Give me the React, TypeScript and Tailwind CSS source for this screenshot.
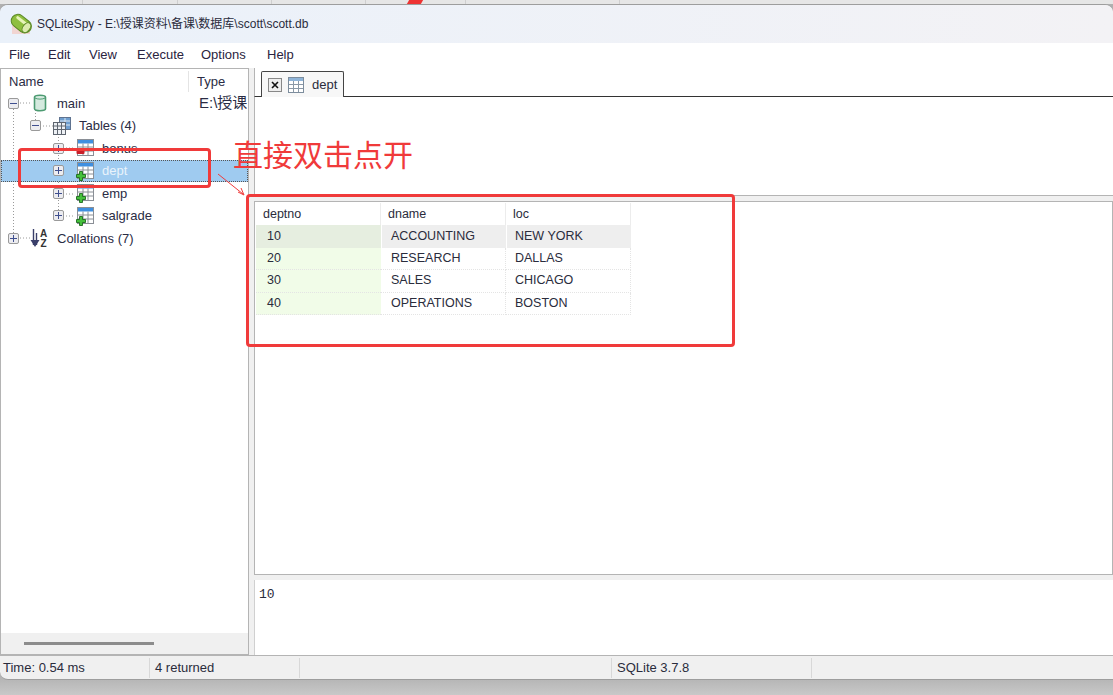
const menuItems = [
  { label: "File", width: "w-[39px]" },
  { label: "Edit", width: "w-[41px]" },
  { label: "View", width: "w-[48px]" },
  { label: "Execute", width: "w-[64px]" },
  { label: "Options", width: "w-[66px]" },
  { label: "Help", width: "w-[40px]" },
];

const deptRows = [
  ["10", "ACCOUNTING", "NEW YORK"],
  ["20", "RESEARCH", "DALLAS"],
  ["30", "SALES", "CHICAGO"],
  ["40", "OPERATIONS", "BOSTON"],
];

function AppLogo() {
  return (
    <svg width="22" height="22" viewBox="0 0 22 22">
      <rect x="2" y="12" width="18" height="9" fill="#f3c9c0" opacity="0.7" />
      <g transform="rotate(38 11 11)">
        <rect x="0" y="4" width="22" height="13" rx="6.5" fill="#8fbf3f" stroke="#5c8a26" />
        <rect x="3" y="6.5" width="13" height="3" rx="1.5" fill="#e6f4b8" />
        <ellipse cx="17.5" cy="10.5" rx="3.5" ry="5.5" fill="#dcecae" stroke="#5c8a26" />
      </g>
    </svg>
  );
}

function Expander({ open }: { open?: boolean }) {
  return (
    <span className="relative block h-[11px] w-[11px] shrink-0 rounded-[2px] border border-[#9a9a9a] bg-[#ececf0]">
      <span className="absolute left-[1px] top-[4px] h-[1px] w-[7px] bg-[#3f4f8f]" />
      {!open && <span className="absolute left-[4px] top-[1px] h-[7px] w-[1px] bg-[#3f4f8f]" />}
    </span>
  );
}

function CylinderIcon() {
  return (
    <svg width="14" height="18" viewBox="0 0 14 18" className="shrink-0">
      <path d="M1.5 3.2C1.5 0.6 12.5 0.6 12.5 3.2V14.8C12.5 17.4 1.5 17.4 1.5 14.8Z" fill="#d5eadf" stroke="#4d9b72" strokeWidth="1.6" />
      <path d="M2 4C4 5.5 10 5.5 12 4" fill="none" stroke="#4d9b72" />
    </svg>
  );
}

function TableIcon({ badge }: { badge?: "plus" | "minus" }) {
  return (
    <svg width="18" height="18" viewBox="0 0 18 18" className="shrink-0 overflow-visible">
      <rect x="1.5" y="0.5" width="16" height="16" fill="#fff" stroke="#8a8f96" />
      <rect x="2" y="1" width="15" height="3.5" fill="#3f8fe0" />
      <path d="M2 8H17M2 12H17M7 4.5V16M12 4.5V16" stroke="#8a8f96" />
      {badge === "plus" && (
        <path d="M3.5 9.5H6.5V12.5H9.5V15.5H6.5V18.5H3.5V15.5H0.5V12.5H3.5Z" fill="#46c03c" stroke="#1d6b1d" strokeWidth="0.9" />
      )}
      {badge === "minus" && <rect x="0.5" y="11" width="8" height="4" rx="1" fill="#c8202a" />}
    </svg>
  );
}

function TablesIcon() {
  return (
    <svg width="18" height="18" viewBox="0 0 18 18" className="shrink-0">
      <rect x="6.5" y="0.5" width="11" height="12" fill="#6f9fd0" stroke="#5f7390" />
      <path d="M7 4H17M7 8H17M12 1V12" stroke="#dfe8f2" />
      <rect x="0.5" y="5.5" width="12" height="12" fill="#eef1f5" stroke="#5f6670" />
      <path d="M1 9H12M1 12.5H12M4.5 6V17M8.5 6V17" stroke="#5f6670" />
    </svg>
  );
}

function SortIcon() {
  return (
    <svg width="20" height="20" viewBox="0 0 20 20" className="shrink-0">
      <path d="M3.5 1V17M6.5 5V17" stroke="#3a3f6a" strokeWidth="1.4" />
      <path d="M0.5 12L5 19L9.5 12Z" fill="#3a3f6a" />
      <text x="10" y="9" fontFamily="Liberation Sans, sans-serif" fontSize="10" fontWeight="700" fill="#333">A</text>
      <text x="10.5" y="19" fontFamily="Liberation Sans, sans-serif" fontSize="10" fontWeight="700" fill="#333">Z</text>
    </svg>
  );
}

function TreeRow({
  indent,
  open,
  icon,
  label,
  selected,
  typeText,
}: {
  indent: string;
  open?: boolean;
  icon: JSX.Element;
  label: string;
  selected?: boolean;
  typeText?: string;
}) {
  return (
    <div
      className={
        selected
          ? "flex h-[22.5px] items-center bg-[#9fcbf0] outline-1 -outline-offset-1 outline-dotted outline-[#555]"
          : "flex h-[22.5px] items-center"
      }
    >
      <div className={`flex w-[189px] shrink-0 items-center ${indent}`}>
        <Expander open={open} />
        <span className="ml-[12px] flex h-[18px] w-[18px] shrink-0 items-center justify-center">{icon}</span>
        <span className={selected ? "ml-[8px] text-[#e9f3fb]" : "ml-[8px]"}>{label}</span>
      </div>
      {typeText && <span className="ml-[9px] overflow-hidden whitespace-nowrap text-[15px]">{typeText}</span>}
    </div>
  );
}

function Sidebar() {
  return (
    <div className="flex w-[249px] shrink-0 flex-col border border-[#b4b4b4] bg-white text-[13px] text-[#2a2c44]">
      <div className="flex h-[23px] shrink-0 items-center pt-[2px]">
        <span className="w-[187px] pl-[8px]">Name</span>
        <span className="h-full border-l border-[#e4e4e4] pl-[8px] leading-[21px]">Type</span>
      </div>
      <div className="relative flex-1">
        <svg className="absolute left-0 top-0" width="76" height="150" fill="none" stroke="#9a9a9a" strokeDasharray="1 2">
          <path d="M12.5 17V146M34.5 18V30M57.5 42V125" />
          <path d="M19 11H29M42 34H52M65 56H73M65 79H73M65 102H73M65 124H73M19 146H29" />
        </svg>
        <div className="relative">
          <TreeRow indent="pl-[7px]" open icon={<CylinderIcon />} label="main" typeText="E:\授课" />
          <TreeRow indent="pl-[29px]" open icon={<TablesIcon />} label="Tables (4)" />
          <TreeRow indent="pl-[52px]" icon={<TableIcon badge="minus" />} label="bonus" />
          <TreeRow indent="pl-[52px]" icon={<TableIcon badge="plus" />} label="dept" selected />
          <TreeRow indent="pl-[52px]" icon={<TableIcon badge="plus" />} label="emp" />
          <TreeRow indent="pl-[52px]" icon={<TableIcon badge="plus" />} label="salgrade" />
          <TreeRow indent="pl-[7px]" icon={<SortIcon />} label="Collations (7)" />
        </div>
      </div>
      <div className="flex h-[21px] shrink-0 items-center bg-[#f0f0f0] pl-[23px]">
        <div className="h-[3px] w-[130px] bg-[#8c8c8c]" />
      </div>
    </div>
  );
}

function ResultGrid() {
  return (
    <div className="flex-1 border border-[#b4b4b4] bg-white pl-px pt-px">
      <div className="grid w-[375px] grid-cols-[125px_125px_125px]">
        <div className="flex h-[22px] items-center border-r border-[#ececec] pl-[7px]">deptno</div>
        <div className="flex h-[22px] items-center border-r border-[#ececec] pl-[7px]">dname</div>
        <div className="flex h-[22px] items-center border-r border-[#ececec] pl-[7px]">loc</div>
        {deptRows.map((row, i) => (
          <div key={row[0]} className="contents">
            <div
              className={
                i === 0
                  ? "flex h-[22.5px] items-center bg-[#e6eee0] pl-[11px]"
                  : "flex h-[22.5px] items-center border-b border-dotted border-[#e4e4e4] bg-[#f1fce8] pl-[11px]"
              }
            >
              {row[0]}
            </div>
            <div
              className={
                i === 0
                  ? "flex h-[22.5px] items-center border-l border-white bg-[#eeeeee] pl-[9px]"
                  : "flex h-[22.5px] items-center border-r border-b border-dotted border-[#e4e4e4] pl-[10px]"
              }
            >
              {row[1]}
            </div>
            <div
              className={
                i === 0
                  ? "flex h-[22.5px] items-center border-l border-white bg-[#eeeeee] pl-[8px]"
                  : "flex h-[22.5px] items-center border-r border-b border-dotted border-[#e4e4e4] pl-[9px]"
              }
            >
              {row[2]}
            </div>
          </div>
        ))}
      </div>
    </div>
  );
}

export default function App() {
  return (
    <div className="relative h-[695px] w-[1113px] overflow-hidden bg-gradient-to-b from-[#b0b0b0] from-[97%] to-[#c8c8c8] font-['Liberation_Sans','Noto_Sans_CJK_SC',sans-serif] text-[12.5px] text-[#2a2c3c]">
      <div className="flex h-[4px] bg-[#e6e6e6]">
        <div className="ml-[82px] w-[95px] border-l border-[#cfcfcf]" />
        <div className="w-[94px] border-l border-[#cfcfcf]" />
        <div className="w-[94px] border-l border-[#cfcfcf]" />
        <div className="w-[100px] border-l border-[#cfcfcf]">
          <div className="ml-[42px] h-[4px] w-[14px] -skew-x-[30deg] bg-[#ee3333]" />
        </div>
        <div className="w-[154px] border-l border-[#cfcfcf]" />
        <div className="border-l border-[#cfcfcf]" />
      </div>
      <div className="flex h-[676px] flex-col overflow-hidden rounded-t-[8px] rounded-bl-[8px] border-t border-b border-[#9d9d9d] bg-[#f0f0f0]">
        <div className="flex h-[38px] shrink-0 items-center bg-gradient-to-r from-[#eaf1fa] to-[#f3f2f5] pl-[10px]">
          <AppLogo />
          <span className="ml-[5px] text-[12px]">SQLiteSpy - E:\授课资料\备课\数据库\scott\scott.db</span>
        </div>
        <div className="flex h-[25px] shrink-0 items-center bg-white pb-[2px] pl-[9px] text-[13px] text-[#2a2440]">
          {menuItems.map((item) => (
            <span key={item.label} className={item.width}>
              {item.label}
            </span>
          ))}
        </div>
        <div className="flex min-h-0 flex-1">
          <Sidebar />
          <div className="ml-[5px] flex min-w-0 flex-1 flex-col">
            <div className="relative h-[29px] shrink-0 border-b border-[#333] border-l border-l-[#b4b4b4] bg-white">
              <div className="absolute left-[6px] top-[3px] flex h-[26px] w-[83px] items-center rounded-t-[2px] border border-b-0 border-[#444] bg-[#f7f7f7] pl-[6px] pt-[1px]">
                <span className="flex h-[14px] w-[14px] items-center justify-center border border-[#888] bg-[#eeeeee]">
                  <svg width="8" height="8" viewBox="0 0 8 8">
                    <path d="M1 1L7 7M7 1L1 7" stroke="#111" strokeWidth="1.6" />
                  </svg>
                </span>
                <span className="ml-[6px]">
                  <svg width="16" height="16" viewBox="0 0 16 16" className="block">
                    <rect x="0.5" y="0.5" width="15" height="15" fill="#fff" stroke="#7d8d9d" />
                    <rect x="1" y="1" width="14" height="3" fill="#8fb4d8" />
                    <path d="M1 7.5H15M1 11.5H15M5.5 4V15M10.5 4V15" stroke="#8a98a6" />
                  </svg>
                </span>
                <span className="ml-[8px] text-[13px]">dept</span>
              </div>
            </div>
            <div className="h-[99px] shrink-0 border-b border-l border-[#b4b4b4] bg-white" />
            <div className="h-[5px] shrink-0" />
            <ResultGrid />
            <div className="h-[5px] shrink-0" />
            <div className="h-[75px] shrink-0 border-l border-[#d0d0d0] bg-white pl-[4px] pt-[5px] font-['Liberation_Mono',monospace] text-[13px]">
              10
            </div>
          </div>
        </div>
        <div className="flex h-[24px] shrink-0 items-center border-t border-[#b4b4b4] text-[13px]">
          <div className="w-[149px] pl-[3px]">Time: 0.54 ms</div>
          <div className="h-[20px] w-[150px] border-l border-[#d8d8d8] pl-[5px] leading-[20px]">4 returned</div>
          <div className="h-[20px] w-[312px] border-l border-[#d8d8d8]" />
          <div className="h-[20px] w-[200px] border-l border-[#d8d8d8] pl-[5px] leading-[20px]">SQLite 3.7.8</div>
          <div className="h-[20px] border-l border-[#d8d8d8]" />
        </div>
      </div>

      {/* red annotation drawn over the screenshot */}
      <div className="absolute left-[18px] top-[148px] h-[40px] w-[193px] rounded-[4px] border-[3px] border-[#f03a3a]" />
      <div className="absolute left-[246px] top-[194px] h-[153px] w-[489px] rounded-[4px] border-[3px] border-[#f03a3a]" />
      <span className="absolute left-[233px] top-[137px] text-[30px] leading-[38px] text-[#f03a3a]">直接双击点开</span>
      <svg className="absolute left-[216px] top-[172px]" width="32" height="26" fill="none" stroke="#f03a3a">
        <path d="M2 2L27 22" />
        <path d="M22 20L28 23L25 16" />
      </svg>
    </div>
  );
}
